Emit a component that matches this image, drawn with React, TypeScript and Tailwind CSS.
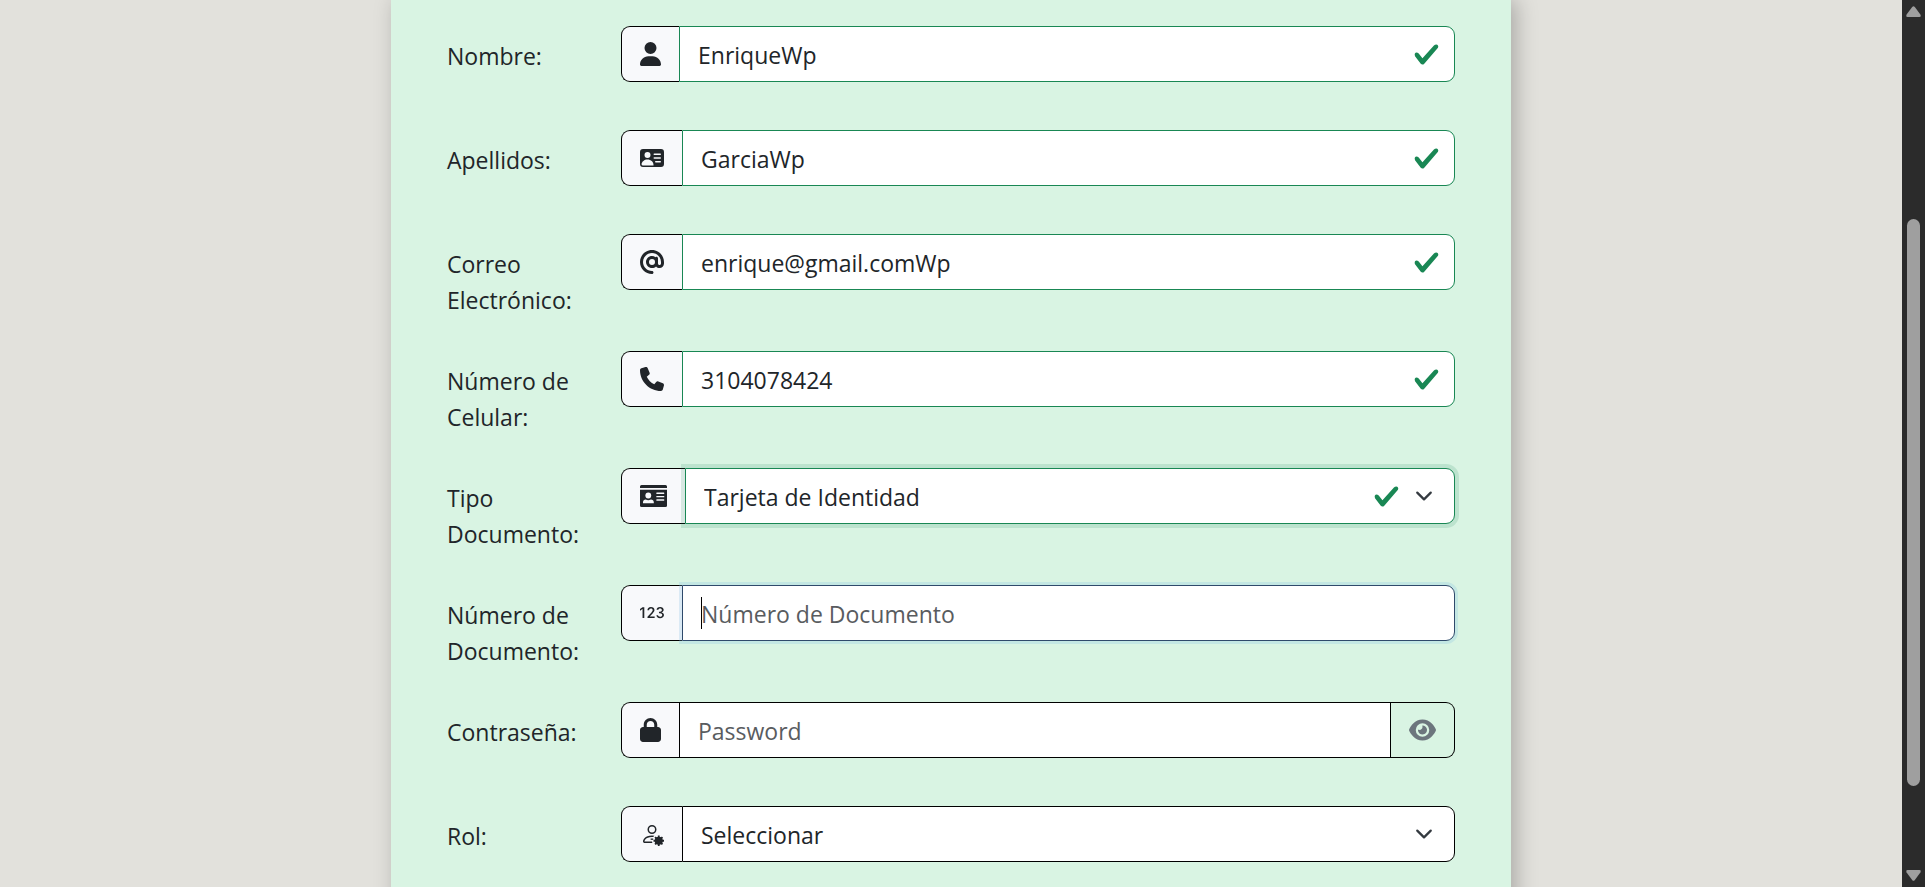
import type { ReactNode } from 'react';
import { Bs123, BsPersonVcardFill } from 'react-icons/bs';
import { FaAt, FaEye, FaLock, FaPhone, FaUser } from 'react-icons/fa6';

const CONTROL =
  'block h-14 w-full min-w-0 border bg-white pt-[2px] pl-[18px] text-[23px] leading-9 text-[#212529] outline-none placeholder:text-[#595c5f] placeholder:opacity-100';
const VALID = 'rounded-r-[9px] border-[#198754] pr-16';

function Check() {
  return (
    <svg className="size-[27px]" viewBox="0 0 8 8" aria-hidden="true">
      <path
        fill="#198754"
        d="M2.3 6.73.6 4.53c-.4-1.04.46-1.4 1.1-.8l1.1 1.4 3.4-3.8c.6-.63 1.6-.27 1.2.7l-4 4.6c-.43.5-.8.4-1.1.1z"
      />
    </svg>
  );
}

function Chevron() {
  return (
    <svg className="size-[18px]" viewBox="0 0 16 16" aria-hidden="true">
      <path fill="none" stroke="#343a40" strokeLinecap="round" strokeLinejoin="round" strokeWidth="2" d="m2 5 6 6 6-6" />
    </svg>
  );
}

function IdCard() {
  return (
    <svg className="h-[22px] w-[27px]" viewBox="0 0 27 22" aria-hidden="true">
      <path fill="currentColor" d="M1.5 0h24A1.5 1.5 0 0 1 27 1.5V3H0V1.5A1.5 1.5 0 0 1 1.500 0Z" />
      <path fill="currentColor" d="M0 4.700h27V20.500a1.500 1.500 0 0 1-1.500 1.500h-24A1.500 1.500 0 0 1 0 20.500Z" />
      <g fill="#f8f9fb">
        <circle cx="8.300" cy="10.500" r="2.900" />
        <path d="M3 18.200v-1c0-1.600 1.200-2.600 2.700-2.600q2.600 1.200 5.200 0c1.600 0 2.900 1 2.900 2.600v1Z" />
        <rect x="16.300" y="7.500" width="8" height="1.400" rx=".4" />
        <rect x="16.300" y="10.900" width="8" height="1.400" rx=".4" />
        <rect x="16.300" y="14.300" width="8" height="1.400" rx=".4" />
      </g>
    </svg>
  );
}

function PersonGear() {
  return (
    <svg className="size-6" viewBox="0 0 16 16" fill="currentColor" aria-hidden="true">
      <path d="M11 5a3 3 0 1 1-6 0 3 3 0 0 1 6 0M8 7a2 2 0 1 0 0-4 2 2 0 0 0 0 4m.256 7a4.500 4.500 0 0 1-.229-1.004H3c.001-.246.154-.986.832-1.664C4.484 10.680 5.711 10 8 10q.39 0 .74.025c.226-.341.496-.65.804-.918Q8.844 9.002 8 9c-5 0-6 3-6 4s1 1 1 1z" />
      <path d="M7.100 11h1.700v.9H7.100z" />
      <circle cx="12.500" cy="12.500" r="2.700" />
      <path
        fill="none"
        stroke="currentColor"
        strokeWidth="1.200"
        d="M12.500 9v7M9 12.500h7M10.030 10.030l4.940 4.940M14.970 10.030l-4.940 4.940"
      />
    </svg>
  );
}

function Adornments({ children, className }: { children: ReactNode; className: string }) {
  return (
    <div className={`pointer-events-none absolute inset-y-0 flex items-center ${className}`}>{children}</div>
  );
}

type FieldProps = { id: string; label: string; icon: ReactNode; children: ReactNode; after?: ReactNode };

function Field({ id, label, icon, children, after }: FieldProps) {
  return (
    <div className="mb-6 flex items-start">
      <label htmlFor={id} className="w-[174px] shrink-0 pt-3 pr-9 pb-[9px] leading-9">
        {label}
      </label>
      <div className="mb-6 flex min-w-0 flex-1">
        <span className="flex h-14 shrink-0 items-center rounded-l-[9px] border border-r-0 border-black bg-[#f8f9fb] px-[18px]">
          {icon}
        </span>
        <div className="relative min-w-0 flex-1">{children}</div>
        {after}
      </div>
    </div>
  );
}

export default function App() {
  return (
    <div className="flex h-screen overflow-hidden bg-[#e2e1dc] font-['Open_Sans','Noto_Sans',sans-serif] text-[23px] text-[#212529]">
      <main className="flex min-w-0 flex-1 justify-center overflow-hidden">
        <form className="h-max w-full max-w-[1120px] bg-[#d9f4e3] px-14 pt-[26px] shadow-[5px_0_20px_rgba(0,0,0,0.25)]">
          <Field id="nombre" label="Nombre:" icon={<FaUser className="h-6 w-[21px]" />}>
            <input id="nombre" type="text" defaultValue="EnriqueWp" className={`${CONTROL} ${VALID}`} />
            <Adornments className="right-[15px]"><Check /></Adornments>
          </Field>
          <Field id="apellidos" label="Apellidos:" icon={<BsPersonVcardFill className="size-6" />}>
            <input id="apellidos" type="text" defaultValue="GarciaWp" className={`${CONTROL} ${VALID}`} />
            <Adornments className="right-[15px]"><Check /></Adornments>
          </Field>
          <Field id="correo" label="Correo Electrónico:" icon={<FaAt className="size-6" />}>
            <input id="correo" type="text" defaultValue="enrique@gmail.comWp" className={`${CONTROL} ${VALID}`} />
            <Adornments className="right-[15px]"><Check /></Adornments>
          </Field>
          <Field id="celular" label="Número de Celular:" icon={<FaPhone className="size-6" />}>
            <input id="celular" type="tel" defaultValue="3104078424" className={`${CONTROL} ${VALID}`} />
            <Adornments className="right-[15px]"><Check /></Adornments>
          </Field>
          <Field id="tipo" label="Tipo Documento:" icon={<IdCard />}>
            <select
              id="tipo"
              className={`${CONTROL} appearance-none rounded-r-[9px] border-[#198754] pr-24 shadow-[0_0_0_4px_rgba(25,135,84,0.15)]`}
            >
              <option>Tarjeta de Identidad</option>
            </select>
            <Adornments className="right-[22px] gap-[15px]">
              <Check />
              <Chevron />
            </Adornments>
          </Field>
          <Field id="numero" label="Número de Documento:" icon={<Bs123 className="size-6" />}>
            <input
              id="numero"
              type="text"
              placeholder="Número de Documento"
              className={`${CONTROL} rounded-r-[9px] border-[#2f4a6b] shadow-[0_0_0_3px_rgba(130,190,227,0.25)]`}
            />
            <Adornments className="left-[19px]">
              <span className="h-8 w-px bg-black" />
            </Adornments>
          </Field>
          <Field
            id="password"
            label="Contraseña:"
            icon={<FaLock className="h-6 w-[21px]" />}
            after={
              <button
                type="button"
                aria-label="Mostrar contraseña"
                className="flex h-14 w-16 shrink-0 items-center justify-center rounded-r-[9px] border border-l-0 border-black text-[#6c757d]"
              >
                <FaEye className="h-6 w-[27px]" />
              </button>
            }
          >
            <input id="password" type="password" placeholder="Password" className={`${CONTROL} border-black pr-4`} />
          </Field>
          <Field id="rol" label="Rol:" icon={<PersonGear />}>
            <select id="rol" className={`${CONTROL} appearance-none rounded-r-[9px] border-black pr-16`}>
              <option>Seleccionar</option>
            </select>
            <Adornments className="right-[22px]"><Chevron /></Adornments>
          </Field>
        </form>
      </main>
      <aside aria-hidden="true" className="flex w-[23px] shrink-0 flex-col items-center bg-[#2b2b2b] py-[6px]">
        <svg className="h-[11px] w-[15px]" viewBox="0 0 15 11">
          <path d="M6.2 1.1Q7.5-.6 8.8 1.1L14.4 8.6Q15.4 11 13.4 11H1.6Q-.4 11 .6 8.6Z" fill="#9f9f9f" />
        </svg>
        <div className="flex w-[13px] flex-1 flex-col pt-[202px] pb-[84px]">
          <div className="flex-1 rounded-full bg-[#9f9f9f]" />
        </div>
        <svg className="h-[11px] w-[15px]" viewBox="0 0 15 11">
          <path d="M6.2 9.9Q7.5 11.6 8.8 9.9L14.4 2.4Q15.4 0 13.4 0H1.6Q-.4 0 .6 2.4Z" fill="#9f9f9f" />
        </svg>
      </aside>
    </div>
  );
}
